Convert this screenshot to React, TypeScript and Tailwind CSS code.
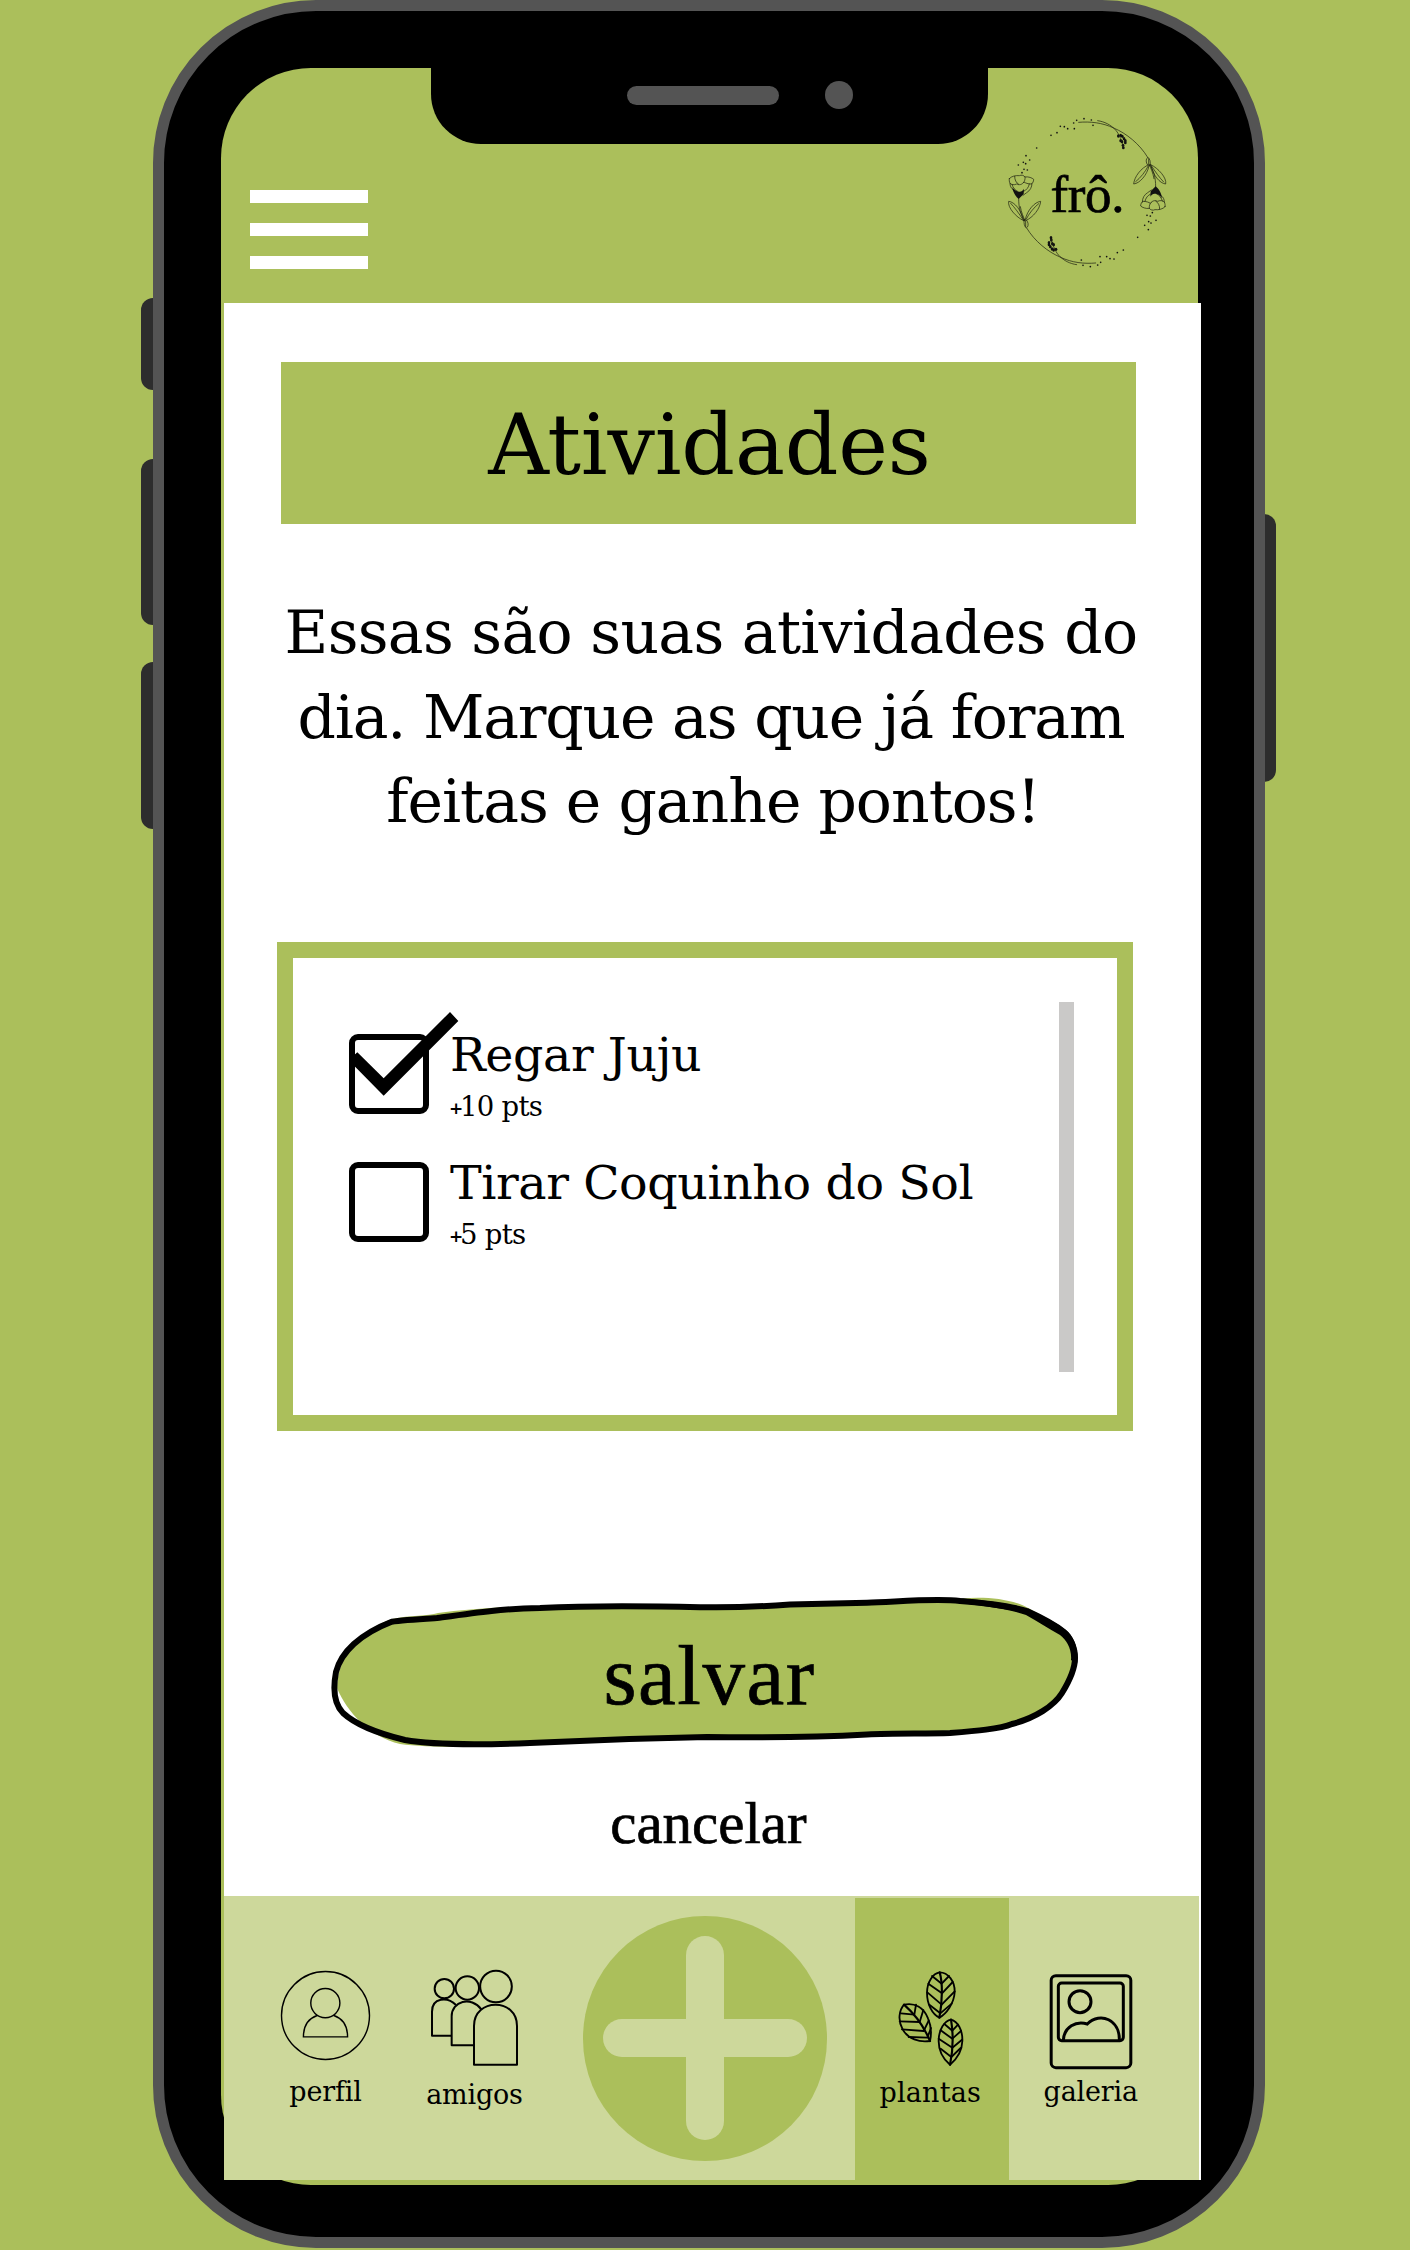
import React from "react";

const slab = "font-['DejaVu_Serif',serif]";
const didone = "font-['Liberation_Serif',serif] [-webkit-text-stroke:0.7px_black]";

const dots: [number, number][] = [
  [213, 106], [231, 98], [241, 79], [253, 80], [263, 86], [283, 86], [281, 69],
  [290, 61], [312, 56], [334, 60], [339, 76], [170, 144], [138, 167], [149, 180],
  [115, 195], [130, 187], [137, 191], [132, 208], [142, 210], [126, 218],
];

const buds: [number, number][] = [
  [213, 413], [214, 420], [207, 428], [217, 431], [207, 434], [211, 440],
  [221, 434], [216, 447], [221, 450], [228, 448],
];

function WreathHalf() {
  return (
    <g fill="none" stroke="#1c2010" strokeWidth="2.1" strokeLinecap="round" strokeLinejoin="round">
      {dots.map(([x, y]) => (
        <circle key={`${x}-${y}`} cx={x} cy={y} r="2.5" fill="#111" stroke="none" />
      ))}
      {buds.map(([x, y]) => (
        <ellipse key={`${x}-${y}`} cx={x} cy={y} rx="4" ry="5" fill="#111" stroke="none" />
      ))}
      <path d="M140 384C164 424 204 456 242 472C276 488 312 492 347 489" />
      <path d="M290 494C268 491 252 481 240 470C228 458 220 442 213 416" />
      <path d="M116 296C116 324 122 346 134 362M121 320C124 338 130 350 135 362" />
      <path d="M131 362C108 352 82 322 86 304C104 306 124 330 131 362ZM92 310C104 322 118 342 129 359" />
      <path d="M136 358C142 330 164 306 182 304C180 326 160 352 137 362M176 311C162 322 146 342 139 357" />
      <path d="M133 360C130 370 134 380 139 384C145 381 146 372 142 364C139 359 135 357 133 360M137 364V380" />
      <path d="M88 236C94 228 108 226 118 227C124 224 132 226 135 231C145 229 157 234 161 238C161 244 158 250 154 252C144 252 136 249 132 246C126 254 118 256 110 252C102 256 94 254 90 250C88 246 87 240 88 236Z" />
      <path d="M104 229C104 240 108 248 116 253M135 231C136 238 134 244 130 248M90 250C90 258 93 264 98 268M96 253C98 262 104 270 114 275M156 250C156 262 150 272 140 278L129 286M148 252C146 262 140 270 131 274" />
      <path d="M97 262C102 270 112 276 118 275C124 276 130 270 132 266L131 282L116 297C108 291 98 276 97 262Z" fill="#111" stroke="none" />
    </g>
  );
}

function Logo() {
  return (
    <div className="relative h-[190px] w-[218px]">
      <svg className="h-full w-full" viewBox="0 0 654 570">
        <WreathHalf />
        <g transform="rotate(180 321.5 278)">
          <WreathHalf />
        </g>
      </svg>
      <span className={`absolute left-[70px] top-[64px] text-[53px] leading-[60px] tracking-[-0.300px] ${didone}`}>frô.</span>
    </div>
  );
}

function Task({ title, points, done }: { title: string; points: number; done?: boolean }) {
  return (
    <li className="flex h-20 gap-[21px]">
      <div className="relative size-20 shrink-0 rounded-[9px] border-[6px] border-black">
        {done && (
          <svg className="absolute -left-[6px] -top-[34px] h-[90px] w-[112px]" viewBox="87 77 336 270">
            <path d="M390 95L415 122L191 346L92 246V234L112 216L191 294Z" />
          </svg>
        )}
      </div>
      <div className="-mt-[4px] whitespace-nowrap">
        <p className="text-[47.5px] leading-[50px] tracking-[-0.42px]">{title}</p>
        <p className="-ml-px mt-[9.500px] flex text-[27.5px] leading-[34px] tracking-[-0.700px]">
          <span className="-mt-px w-[11px] text-[17px] font-bold leading-[40px]">+</span>
          <span>{points} pts</span>
        </p>
      </div>
    </li>
  );
}

function SaveButton() {
  return (
    <button className="relative mx-auto mt-[154px] block h-[170px] w-[760px]">
      <svg className="h-full w-full" viewBox="325 1585 760 170">
        <path
          fill="#abbf5b"
          d="M392 1619C410 1615 428 1616 438 1613C490 1606 560 1604 700 1606L946 1600C975 1596 1008 1596 1030 1609C1065 1628 1075 1645 1073 1662C1068 1690 1050 1714 1012 1724C980 1732 920 1731 820 1734L610 1740C540 1746 440 1750 400 1744C370 1737 347 1712 337 1688C338 1655 360 1630 392 1619Z"
        />
        <path
          fill="none"
          stroke="#000"
          strokeWidth="6"
          strokeLinejoin="round"
          d="M391.7 1621.7C360 1634 341 1652 336 1672C333 1688 333 1703 343 1713C356 1725 380 1734 405 1740C438 1746 503 1744 530 1743C590 1740 650 1738 707 1737C780 1738 820 1737 867 1734.500C895 1733 925 1734 950 1733C975 1731 1000 1729 1012 1724C1035 1718 1054 1706 1062 1693C1070 1680 1075 1667 1075 1658C1075 1647 1070 1637 1064 1632C1053 1623 1038 1616 1027 1611C1007 1605 985 1603 960 1601C935 1598 895 1602 867 1602.700L790 1604.500C740 1608 725 1607 700 1607.300C650 1606 580 1606 540 1608C500 1609 480 1612 437 1618C420 1619 402 1620 391.700 1621.700Z"
        />
        <path
          d="M956 1598C985 1600 1012 1604 1030 1610C1046 1617 1060 1625 1068 1632C1076 1640 1079 1654 1077 1664L1071 1660C1072 1650 1067 1640 1060 1635C1048 1628 1038 1622 1026 1615C1006 1608 980 1606 962 1603Z"
        />
      </svg>
      <span className={`absolute left-[278.500px] top-[54px] text-[85px] leading-[72px] tracking-[1.5px] ${didone}`}>salvar</span>
    </button>
  );
}

function ProfileIcon() {
  return (
    <svg className="h-[91px] w-[91px] shrink-0" viewBox="60 90 272 272" fill="none" stroke="#000" strokeWidth="4.2">
      <circle cx="196" cy="226" r="131.500" />
      <circle cx="195.500" cy="189" r="43.500" />
      <path d="M171 226C145 235 130 258 130 290H262C262 258 247 235 221 226" />
    </svg>
  );
}

function FriendsIcon() {
  return (
    <svg className="ml-px h-[98px] w-[90px] shrink-0" viewBox="510 88 270 294" fill="none" stroke="#000" strokeWidth="6" strokeLinejoin="round">
      <circle cx="553" cy="147" r="29" />
      <circle cx="622" cy="145" r="35" />
      <circle cx="708" cy="140.500" r="47.500" />
      <path d="M574 288H516V216C516 174 562 170 588 196" />
      <path d="M641 317H575V230C575 184 633 168 664 209" />
      <path d="M642 375V259C642 174 771 174 771 259V375Z" />
    </svg>
  );
}

function LeavesIcon() {
  return (
    <svg className="-ml-[2px] h-[96.700px] w-[66.700px] shrink-0" viewBox="170 88 200 290" fill="none" stroke="#000" strokeWidth="5.500" strokeLinecap="round" strokeLinejoin="round">
      <path d="M295 95C320 95 341 122 340 154C338 190 314 220 294 231C272 220 257 190 257 157C257 122 276 98 295 95Z" />
      <path d="M295 95C304 125 304 180 294 231" strokeWidth="6.500" />
      <path d="M272 106L301 129L323 106M261 129L302 158L334 124M258 155L301 192L340 152M264 192L297 218L331 189" />
      <path d="M188 192C220 185 247 200 260 233C269 253 271 278 266 301C234 306 200 295 184 266C168 238 174 208 188 192Z" />
      <path d="M188 192C220 220 248 258 266 301" strokeWidth="6.500" />
      <path d="M179 218L219 222L224 192M175 242L235 244L246 208M182 266L247 271L262 240M202 289L258 291L269 262" />
      <path d="M329 237C350 243 364 268 363 301C362 333 343 358 326 372C306 355 291 329 292 298C293 266 309 241 329 237Z" />
      <path d="M329 237C336 280 335 330 326 372" strokeWidth="6.500" />
      <path d="M309 250L333 270L350 252M298 269L333 294L359 271M292 294L333 321L362 297M298 324L330 349L358 322" />
    </svg>
  );
}

function GalleryIcon() {
  return (
    <svg className="h-[97.300px] w-[84px] shrink-0" viewBox="625 98 252 292" fill="none" stroke="#000" strokeWidth="9">
      <rect x="631.500" y="106" width="239" height="276" rx="14" />
      <rect x="653" y="128" width="195" height="173" rx="10" />
      <circle cx="718" cy="184" r="33" />
      <path d="M668 300C670 260 706 240 740 251C780 212 838 240 836 300" />
    </svg>
  );
}

function Hardware({ className }: { className: string }) {
  return <span className={`absolute bg-[#2d2d2d] ${className}`} />;
}

export default function App() {
  return (
    <div className={`relative h-[2250px] w-[1410px] overflow-hidden bg-[#abbf5b] text-black ${slab}`}>
      <Hardware className="left-[141px] top-[297.500px] h-[92px] w-5 rounded-l-[12px]" />
      <Hardware className="left-[141px] top-[459px] h-[166px] w-5 rounded-l-[12px]" />
      <Hardware className="left-[141px] top-[662px] h-[167px] w-5 rounded-l-[12px]" />
      <Hardware className="left-[1256px] top-[514px] h-[268px] w-5 rounded-r-[12px]" />

      <div className="relative ml-[153px] h-[2248px] w-[1111.500px] rounded-[163px] border-[11px] border-[#545454] bg-black pl-[57.400px] pt-[56.500px]">
        <div className="relative h-[2117px] w-[977px] rounded-[90px] bg-[#abbf5b]">
          <div className="absolute -top-px left-[210px] flex h-[77px] w-[557px] rounded-b-[50px] bg-black pl-[195.500px] pt-[19px]">
            <span className="h-[19px] w-[152px] rounded-full bg-[#545454]" />
            <span className="-mt-[5px] ml-[46.500px] size-7 rounded-full bg-[#545454]" />
          </div>

          <header className="flex h-[235.500px] items-start justify-between pl-[28.600px] pt-[32.500px]">
            <div className="mt-[90px] flex flex-col gap-5">
              <span className="h-[13px] w-[118px] bg-white" />
              <span className="h-[13px] w-[118px] bg-white" />
              <span className="h-[13px] w-[118px] bg-white" />
            </div>
            <Logo />
          </header>

          <main className="ml-[2.600px] flex h-[1877px] w-[977px] flex-col bg-white">
            <h1 className="ml-[57px] mt-[58.500px] h-[162px] w-[855px] bg-[#abbf5b] pl-[2px] text-center text-[84px] leading-[167px] tracking-[-0.200px]">
              Atividades
            </h1>
            <p className="ml-[56.500px] mt-[66.500px] w-[863px] whitespace-nowrap text-center text-[60px] leading-[84.500px]">
              <span className="block -translate-x-[1px] tracking-[-0.700px]">Essas são suas atividades do</span>
              <span className="block -translate-x-[1px] tracking-[-1.200px]">dia. Marque as que já foram</span>
              <span className="block translate-x-[1px] tracking-[-1px]">feitas e ganhe pontos!</span>
            </p>

            <section className="ml-[53px] mt-[98px] flex h-[489px] w-[856px] shrink-0 justify-between border-[16px] border-[#abbf5b] pl-[56px] pr-[43px] pt-[44px]">
              <ul className="mt-[32px] flex flex-col gap-[48px]">
                <Task title="Regar Juju" points={10} done />
                <Task title="Tirar Coquinho do Sol" points={5} />
              </ul>
              <span className="h-[370px] w-[15px] bg-[#cac9c8]" />
            </section>

            <div className="ml-[101px] w-[760px]">
              <SaveButton />
            </div>
            <button className={`ml-[384.500px] mt-[33.500px] w-[200px] whitespace-nowrap text-center text-[59px] leading-[70px] ${didone}`}>cancelar</button>

            <nav className="mt-auto flex h-[284px] w-[975px] shrink-0 bg-[#cdd89b] text-[27px] leading-[34px] tracking-[-0.200px]">
              <div className="flex w-[203px] flex-col items-center pt-[74px]">
                <ProfileIcon />
                <span className="mt-[14px]">perfil</span>
              </div>
              <div className="flex w-[95px] flex-col items-center whitespace-nowrap pt-[73px]">
                <FriendsIcon />
                <span className="mt-[11px]">amigos</span>
              </div>
              <div className="relative ml-[61px] mt-[20px] size-[244.500px] rounded-full bg-[#abbf5b]">
                <span className="absolute left-[103px] top-[20px] h-[204px] w-[38px] rounded-full bg-[#cdd89b]" />
                <span className="absolute left-[20px] top-[103px] h-[38px] w-[204px] rounded-full bg-[#cdd89b]" />
              </div>
              <div className="ml-[27.500px] mt-[2px] flex w-[154.500px] flex-col items-center bg-[#abbf5b] pt-[71.500px]">
                <LeavesIcon />
                <span className="-ml-[4px] mt-[10px] tracking-[0.200px]">plantas</span>
              </div>
              <div className="flex w-[162.500px] flex-col items-center pt-[76.700px]">
                <GalleryIcon />
                <span className="mt-[5.500px]">galeria</span>
              </div>
            </nav>
          </main>
        </div>
      </div>
    </div>
  );
}
